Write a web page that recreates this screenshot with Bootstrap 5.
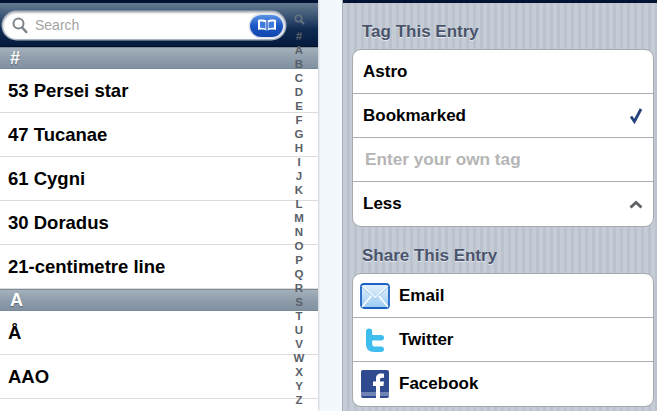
<!doctype html>
<html lang="en">
<head>
  <meta charset="utf-8">
  <title>Dictionary</title>
  <link href="https://cdn.jsdelivr.net/npm/bootstrap@5.3.0/dist/css/bootstrap.min.css" rel="stylesheet">
  <style>
    html, body { height: 411px; overflow: hidden; }
    body { background: #f3f8fc; font-family: "Liberation Sans", Arial, sans-serif; }
    .shell { height: 411px; }
    .pane-list { width: 318px; background: #fff; position: relative; overflow: hidden; box-shadow: 1px 0 2px rgba(0,0,0,.15); }
    .pane-gap { width: 24px; }
    .pane-detail {
      width: 315px; overflow: hidden; border-left: 1px solid #a9b0bb;
      background: repeating-linear-gradient(90deg, #c5ccd6 0, #c5ccd6 4px, #bac2cd 4px, #bac2cd 7px);
    }
    .topline { height: 3px; background: #021233; }
    .search-bar {
      height: 44px; padding: 9px 33px 0 3px;
      background: linear-gradient(#64798f 0, #3c5675 30%, #0e2a52 62%, #041a3c 100%);
      border-bottom: 1px solid #02102a;
    }
    .search-box {
      height: 27px; border-radius: 14px; background: #fff; padding: 0 2px 0 9px;
      box-shadow: 0 0 0 1.5px #a9b3bf, inset 0 1px 2px rgba(0,0,0,.25);
      color: #a3a3a3; font-size: 14px; line-height: 29px;
    }
    .search-glass { margin-right: 7px; }
    .book-btn {
      width: 33px; height: 22px; border-radius: 12px;
      background: linear-gradient(#5a93e6, #1b56c4 50%, #1247ad);
      box-shadow: 0 0 0 1.5px #dfe4ea;
    }
    .sect {
      height: 22px; padding-left: 10px; color: #fff; font-size: 18px; font-weight: 700; line-height: 21px;
      background: linear-gradient(#a4b1bc, #8f9eab 50%, #8191a0);
      border-top: 1px solid #7f8d9b; border-bottom: 1px solid #76889a;
      text-shadow: 0 1px 1px rgba(60,70,80,.6);
    }
    .entry {
      height: 44px; padding-left: 8px; font-size: 18.5px; font-weight: 700; color: #000; line-height: 44px;
      border-bottom: 1px solid #dcdcdc;
    }
    .entry.last { border-bottom: 0; }
    .alpha {
      position: absolute; top: 14px; left: 288px; width: 22px;
      font-size: 11.500px; font-weight: 700; line-height: 14px; color: #5a6069; text-align: center;
    }
    .alpha svg { display: block; margin: 0 auto 4px; }
    .group-title {
      margin: 0; padding-left: 19px; font-size: 17px; font-weight: 700; color: #4a546b; line-height: 20px;
      text-shadow: 0 1px 0 #e4e8ee;
    }
    .title-top { padding-top: 19px; padding-bottom: 7px; }
    .title-next { padding-top: 19px; padding-bottom: 7px; }
    .cell-group {
      margin: 0 3px 0 9px; background: #fff; border: 1px solid #a6a9ae; border-radius: 9px; overflow: hidden;
    }
    .cell {
      height: 44px; padding: 0 10px 0 10px; font-size: 17px; font-weight: 700; color: #000;
      border-bottom: 1px solid #a9abb0;
    }
    .cell:last-child { border-bottom: 0; height: 44px; }
    .cell.hint { color: #b5b5b5; padding-left: 12px; font-size: 17.2px; }
    .cell-icon { width: 30px; height: 30px; margin-right: 9px; margin-left: -3px; flex: none; }
  </style>
</head>
<body>
  <div class="shell d-flex">
    <div class="pane-list">
      <div class="topline"></div>
      <div class="search-bar">
        <div class="search-box d-flex align-items-center">
          <svg width="16" height="17" viewBox="0 0 16 17" class="search-glass"><circle cx="6.5" cy="6.5" r="5" fill="none" stroke="#7d858c" stroke-width="2"/><path d="M10.2 10.5l4 4.5" stroke="#7d858c" stroke-width="2.6" stroke-linecap="round"/></svg>
          <span>Search</span>
          <span class="book-btn ms-auto d-flex align-items-center justify-content-center">
            <svg width="22" height="15" viewBox="0 0 22 15"><path d="M11 3C9 1.500 5 1.200 2 2v10c3-.8 7-.5 9 1 2-1.500 6-1.800 9-1V2c-3-.8-7-.5-9 1z" fill="#fff"/><path d="M11 3v10" stroke="#1b56c4" stroke-width="1.400"/><path d="M4 3.500c1.500-.2 3.800 0 5.500 1v6c-1.700-.8-4-1-5.500-.8zM18 3.500c-1.500-.2-3.800 0-5.500 1v6c1.700-.8 4-1 5.500-.8z" fill="#3f7bdc"/></svg>
          </span>
        </div>
      </div>
      <div class="sect">#</div>
      <div class="entry">53 Persei star</div>
      <div class="entry">47 Tucanae</div>
      <div class="entry">61 Cygni</div>
      <div class="entry">30 Doradus</div>
      <div class="entry">21-centimetre line</div>
      <div class="sect">A</div>
      <div class="entry">Å</div>
      <div class="entry">AAO</div>
      <div class="entry last"></div>
      <div class="alpha">
        <svg width="11" height="11" viewBox="0 0 11 11"><circle cx="4.500" cy="4.500" r="3.200" fill="none" stroke="#67727f" stroke-width="1.600"/><path d="M7 7l3 3" stroke="#67727f" stroke-width="2"/></svg>
        <div>#</div><div>A</div><div>B</div><div>C</div><div>D</div><div>E</div><div>F</div><div>G</div><div>H</div><div>I</div><div>J</div><div>K</div><div>L</div><div>M</div><div>N</div><div>O</div><div>P</div><div>Q</div><div>R</div><div>S</div><div>T</div><div>U</div><div>V</div><div>W</div><div>X</div><div>Y</div><div>Z</div>
      </div>
    </div>
    <div class="pane-gap"></div>
    <div class="pane-detail">
      <div class="topline"></div>
      <h2 class="group-title title-top">Tag This Entry</h2>
      <div class="cell-group">
        <div class="cell d-flex align-items-center">Astro</div>
        <div class="cell d-flex align-items-center justify-content-between">Bookmarked
          <svg width="14" height="17" viewBox="0 0 14 17"><path d="M2 9.500l3.400 5L12 2" fill="none" stroke="#24427c" stroke-width="2.800"/></svg>
        </div>
        <div class="cell hint d-flex align-items-center">Enter your own tag</div>
        <div class="cell d-flex align-items-center justify-content-between">Less
          <svg width="14" height="9" viewBox="0 0 14 9"><path d="M1.500 7.500L7 2.500l5.500 5" fill="none" stroke="#5f6368" stroke-width="3"/></svg>
        </div>
      </div>
      <h2 class="group-title title-next">Share This Entry</h2>
      <div class="cell-group">
        <div class="cell d-flex align-items-center">
          <svg class="cell-icon" viewBox="0 0 30 30"><defs><linearGradient id="mailFill" x1="0" y1="0" x2="0" y2="1"><stop offset="0" stop-color="#e6f2fc"/><stop offset="1" stop-color="#9bcbf3"/></linearGradient></defs><rect x="1" y="3" width="28" height="24" rx="3" fill="url(#mailFill)" stroke="#1c62c4" stroke-width="1.800"/><path d="M2 5l13 12L28 5M2 26l10-12M28 26L18 14" fill="none" stroke="#fff" stroke-width="1.500"/><path d="M2 6l13 12L28 6" fill="none" stroke="#7fb5e8" stroke-width=".8"/></svg>
          Email
        </div>
        <div class="cell d-flex align-items-center">
          <svg class="cell-icon" viewBox="0 0 30 30"><path d="M9 3.500c2.200 0 3.200 1.200 3.200 3V10H21c2 0 3 1 3 2.700s-1 2.800-3 2.800h-8.800v3.200c0 2 1 2.800 3 2.800H21c2 0 3 1 3 2.700S23 27 21 27h-7c-5 0-8-3-8-8V6.500c0-1.800 1-3 3-3z" fill="#3fbdee"/></svg>
          Twitter
        </div>
        <div class="cell d-flex align-items-center">
          <svg class="cell-icon" viewBox="0 0 30 30"><rect x="1" y="1" width="28" height="28" rx="2" fill="#2f4a8f"/><rect x="1" y="23" width="28" height="4" fill="#6f83b4"/><path d="M16 29V17h-3v-4.500h3V9.500c0-3.500 2-5 5-5 1.200 0 2.300.1 3 .2v4h-2c-1.500 0-2 .8-2 2v1.800h4l-.6 4.500H20v12z" fill="#fff"/></svg>
          Facebook
        </div>
      </div>
    </div>
  </div>
</body>
</html>
